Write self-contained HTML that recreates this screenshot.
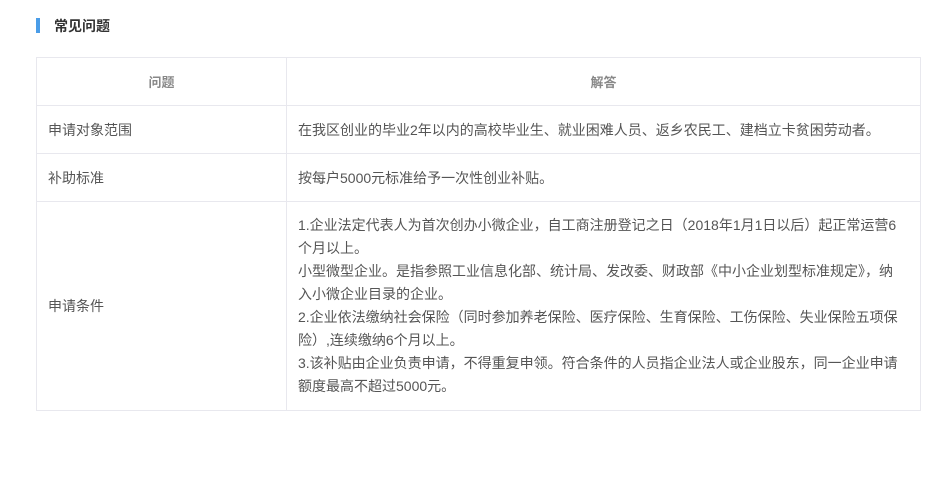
<!DOCTYPE html>
<html><head><meta charset="utf-8"><style>
body{margin:0;background:#fff;font-family:"Liberation Sans","Noto Sans CJK SC",sans-serif;color:#555;}
.title{position:absolute;left:36px;top:18px;height:15px;border-left:4px solid #4a9de8;padding-left:14px;font-size:14px;font-weight:bold;color:#333;line-height:16px;}
table{position:absolute;left:36px;top:57px;width:885px;border-collapse:collapse;font-size:14px;}
td{border:1px solid #e8e8ee;padding:0 11px;height:47px;vertical-align:middle;white-space:nowrap;}
td.l{width:227px;}
.h td{text-align:center;color:#888;font-weight:bold;font-size:13px;}
.big td{height:208px;line-height:23px;}
</style></head><body>
<div class="title">常见问题</div>
<table>
<tr class="h"><td class="l">问题</td><td>解答</td></tr>
<tr><td class="l">申请对象范围</td><td>在我区创业的毕业2年以内的高校毕业生、就业困难人员、返乡农民工、建档立卡贫困劳动者。</td></tr>
<tr><td class="l">补助标准</td><td>按每户5000元标准给予一次性创业补贴。</td></tr>
<tr class="big"><td class="l">申请条件</td><td>1.企业法定代表人为首次创办小微企业，自工商注册登记之日（2018年1月1日以后）起正常运营6<br>个月以上。<br>小型微型企业。是指参照工业信息化部、统计局、发改委、财政部《中小企业划型标准规定》，纳<br>入小微企业目录的企业。<br>2.企业依法缴纳社会保险（同时参加养老保险、医疗保险、生育保险、工伤保险、失业保险五项保<br>险）,连续缴纳6个月以上。<br>3.该补贴由企业负责申请，不得重复申领。符合条件的人员指企业法人或企业股东，同一企业申请<br>额度最高不超过5000元。</td></tr>
</table>
</body></html>
